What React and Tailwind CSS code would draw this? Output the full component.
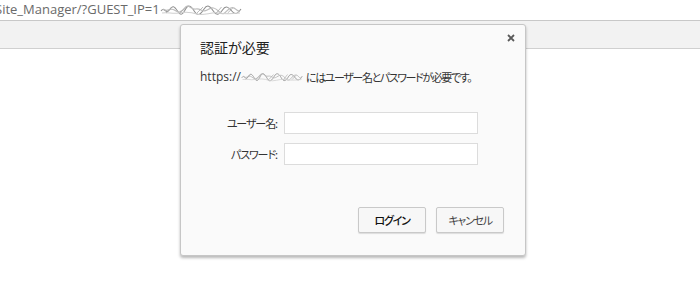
import React from "react";

// obscured bits of the address, drawn as scribbles
const Scribble = ({ width, height }) => (
    <svg width={width} height={height} viewBox="0 0 80 12" preserveAspectRatio="none" className="inline-block">
        <path d="M1 7 C4 2,6 11,9 6 S14 2,17 7 S22 11,25 5 S31 3,34 8 S40 10,43 5 S49 2,52 7 S58 11,61 6 S67 3,70 7 S76 10,79 5" fill="none" stroke="#8e8e8e" strokeWidth="1" />
        <path d="M3 5 C7 9,10 3,14 6 S20 9,24 4 S30 6,35 5 S41 9,46 6 S53 3,58 8 S64 6,69 4 S74 8,78 7" fill="none" stroke="#bdbdbd" strokeWidth="1.2" />
        <path d="M2 9 C8 8,12 10,18 9 S30 8,36 10 S50 8,56 9 S70 10,78 9" fill="none" stroke="#cfcfcf" strokeWidth="1" />
        <path d="M6 9 L12 3 M19 9 L25 4 M36 9 L42 3 M55 9 L60 3 M66 9 L71 4" fill="none" stroke="#a8a8a8" strokeWidth="0.8" />
    </svg>
);

const jp = "font-['Noto_Sans_CJK_JP','Noto_Sans',sans-serif] [font-feature-settings:'palt']";

const Field = ({ label }) => (
    <div className="flex items-center">
        <span className={`w-[77px] text-right whitespace-nowrap text-[11px] tracking-[-1.1px] leading-[16px] text-[#333] ${jp}`}>{label}</span>
        <input type="text" className="ml-[7px] w-[194px] h-[22px] bg-white border border-[#dcdcdc] outline-none" />
    </div>
);

export default function App() {
    return (
        <div className="relative w-[700px] h-[283px] overflow-hidden bg-white">
            {/* address bar */}
            <div className="h-[21px] flex items-center border-b border-[#c8c8c8] font-['Open_Sans',sans-serif] text-[13px] text-[#6a6a6a] whitespace-nowrap">
                <span className="ml-[-5px]">Site_Manager/?GUEST_IP=1</span>
                <Scribble width={82} height={12} />
            </div>
            <div className="h-[28px] bg-[#f2f2f2] border-b border-[#d0d0d0]" />

            {/* auth dialog */}
            <div className="absolute left-[180px] top-[24px] w-[346px] h-[232px] bg-[#fafafa] border border-[#c6c6c6] rounded-[3px] shadow-[0_2px_3px_rgba(0,0,0,0.28)] flex flex-col pl-[19px] pr-[21px] pt-[12px]">
                <svg className="absolute right-[10px] top-[9px]" width="8" height="8" viewBox="0 0 8 8">
                    <path d="M1 1 L7 7 M7 1 L1 7" stroke="#5a5a5a" strokeWidth="1.8" />
                </svg>
                <h1 className={`text-[14px] leading-[20px] text-[#222] ${jp}`}>認証が必要</h1>
                <p className="mt-[12px] flex items-center whitespace-nowrap text-[12px] leading-[16px] text-[#333]">
                    <span className="font-['Open_Sans',sans-serif] text-[12px]">https://</span>
                    <Scribble width={62} height={10} />
                    <span className={`ml-[3px] text-[11px] tracking-[-1.4px] ${jp}`}>にはユーザー名とパスワードが必要です。</span>
                </p>
                <div className="mt-[27px] flex flex-col gap-[9px]">
                    <Field label="ユーザー名:" />
                    <Field label="パスワード:" />
                </div>
                <div className="mt-[42px] flex justify-end gap-[10px]">
                    <button className={`w-[68px] h-[26px] bg-[#f7f7f7] border border-[#c9c9c9] rounded-[2px] shadow-[0_1px_1px_rgba(0,0,0,0.12)] text-[11px] tracking-[-1.3px] font-medium text-[#111] ${jp}`}>ログイン</button>
                    <button className={`w-[68px] h-[26px] bg-[#f7f7f7] border border-[#c9c9c9] rounded-[2px] shadow-[0_1px_1px_rgba(0,0,0,0.12)] text-[11px] tracking-[-1.3px] text-[#444] ${jp}`}>キャンセル</button>
                </div>
            </div>
        </div>
    );
}
